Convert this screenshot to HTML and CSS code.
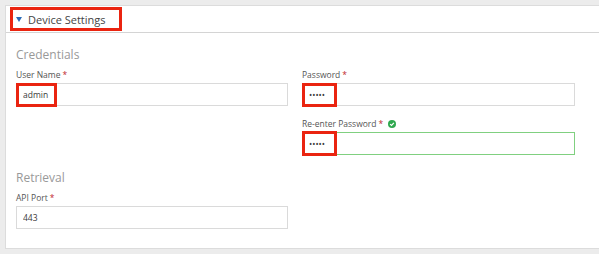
FILE: index.html
```html
<!DOCTYPE html>
<html lang="en">
<head>
    <meta charset="UTF-8">
    <meta name="viewport" content="width=device-width, initial-scale=1.0">
    <title>Device Settings</title>
    <link rel="stylesheet" href="styles.css">
</head>
<body>
    <div class="panel">
        <!-- panel header -->
        <div class="panel-header">
            <span class="mark header-mark">
                <svg class="caret" width="6" height="5" viewBox="0 0 6 5"><path d="M0 0 H6 L3 5 Z" fill="#2b6cb8"/></svg>
                <span class="panel-title">Device Settings</span>
            </span>
        </div>

        <div class="panel-body">
            <h3 class="section-title">Credentials</h3>
            <div class="form-grid">
                <div class="field">
                    <label for="user-name">User Name <span class="req">*</span></label>
                    <div class="input-wrap">
                        <input type="text" id="user-name" value="admin">
                        <span class="mark value-mark admin-mark"></span>
                    </div>
                </div>
                <div class="field">
                    <label for="password">Password <span class="req">*</span></label>
                    <div class="input-wrap">
                        <input type="password" id="password" value="admin">
                        <span class="mark value-mark pw-mark"></span>
                    </div>
                </div>
                <div class="field col-2">
                    <label for="password2">Re-enter Password <span class="req">*</span>
                        <svg class="ok" width="8" height="8" viewBox="0 0 8 8"><circle cx="4" cy="4" r="4" fill="#2fa84f"/><path d="M2.1 4.1 L3.5 5.4 L5.9 2.8" fill="none" stroke="#fff" stroke-width="1.2"/></svg>
                    </label>
                    <div class="input-wrap">
                        <input type="password" id="password2" class="valid" value="admin">
                        <span class="mark value-mark pw-mark pw2-mark"></span>
                    </div>
                </div>
            </div>

            <h3 class="section-title retrieval">Retrieval</h3>
            <div class="form-grid">
                <div class="field">
                    <label for="api-port">API Port <span class="req">*</span></label>
                    <div class="input-wrap">
                        <input type="text" id="api-port" value="443">
                    </div>
                </div>
            </div>
        </div>
    </div>
</body>
</html>
```

FILE: styles.css
```css
/* page */
body {
    margin: 5px 0 0 5px;
    background-color: #ececec;
    font-family: "Open Sans", "Liberation Sans", sans-serif;
    color: #444;
}

/* panel */
.panel {
    background-color: #fff;
    border: 1px solid #dcdcdc;
    border-right: none;
    box-shadow: 0 2px 3px rgba(0, 0, 0, 0.08);
}

.panel-header {
    height: 26px;
    display: flex;
    align-items: center;
    padding-left: 4px;
    border-bottom: 1px solid #d4d4d4;
}

/* red annotation boxes */
.mark {
    border: 3px solid #ea2410;
    box-sizing: border-box;
}

.header-mark {
    display: flex;
    align-items: center;
    width: 112px;
    height: 24px;
    padding-left: 3px;
}

.caret {
    margin-right: 6px;
}

.panel-title {
    font-size: 11px;
    color: #444;
}

.panel-body {
    padding: 13px 10px 19px 10px;
}

.section-title {
    margin: 0 0 6px;
    font-size: 12px;
    line-height: 17px;
    font-weight: normal;
    color: #999;
}

.section-title.retrieval {
    margin-top: 14px;
}

/* form grid */
.form-grid {
    display: grid;
    grid-template-columns: 272px 273px;
    column-gap: 14px;
    row-gap: 12px;
}

.col-2 {
    grid-column: 2;
}

label {
    display: flex;
    align-items: center;
    font-size: 8.5px;
    line-height: 12px;
    margin-bottom: 2px;
    color: #555;
}

.req {
    color: #c0272d;
    margin-left: 2px;
}

.ok {
    margin-left: 5px;
}

.input-wrap {
    position: relative;
}

input {
    display: block;
    width: 100%;
    height: 23px;
    box-sizing: border-box;
    padding: 0 6px;
    border: 1px solid #dadada;
    font-family: "Open Sans", "Liberation Sans", sans-serif;
    font-size: 8.5px;
    color: #3a3a3a;
    outline: none;
}

input.valid {
    border-color: #80d080;
}

.value-mark {
    position: absolute;
    left: 0;
    top: 0;
    height: 24px;
}

.admin-mark {
    width: 41px;
}

.pw-mark {
    width: 35px;
}

.pw2-mark {
    top: -1px;
    height: 25px;
}
```
